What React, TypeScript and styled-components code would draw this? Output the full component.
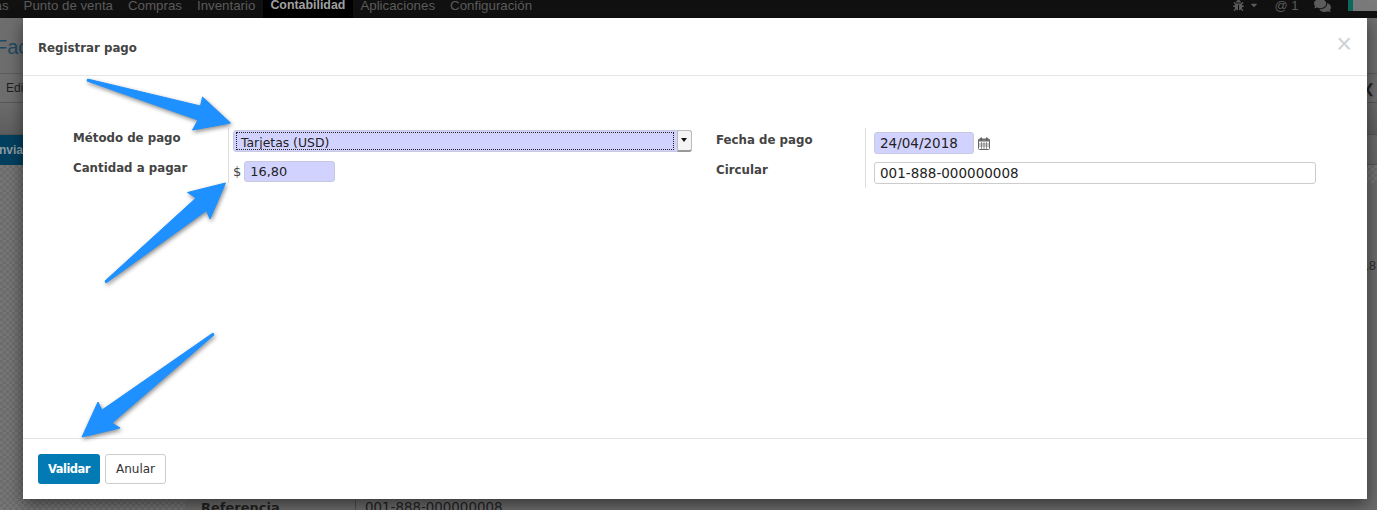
import React from 'react';
import styled, { createGlobalStyle } from 'styled-components';
import { FaBug, FaCaretDown, FaComments } from 'react-icons/fa';

const GlobalStyle = createGlobalStyle`
    html, body {
        margin: 0;
        padding: 0;
        background: #6f6f6f;
    }
`;

const navItems = ['as', 'Punto de venta', 'Compras', 'Inventario', 'Contabilidad', 'Aplicaciones', 'Configuración'];

const Arrow = ({ points }: { points: string }) => (
    <polygon points={points} fill="#1e90ff" stroke="#1e90ff" strokeWidth="1" strokeLinejoin="round" />
);

const CalendarIcon = () => (
    <svg width="12" height="13" viewBox="0 0 12 13">
        <rect x="0.5" y="2" width="11" height="10.5" rx="1" fill="#fff" stroke="#666" />
        <rect x="0.5" y="2" width="11" height="2.5" fill="#777" />
        <rect x="2.5" y="0.5" width="1.5" height="3" fill="#555" />
        <rect x="8" y="0.5" width="1.5" height="3" fill="#555" />
        <path d="M3.5 5V12M6 5V12M8.5 5V12M1 7H11M1 9H11" stroke="#777" strokeWidth="0.8" />
    </svg>
);

const App = () => {
    return (
        <Page>
            <GlobalStyle />
            <Backdrop>
                <NavBar>
                    <NavList>
                        {navItems.map(item => (
                            <NavItem key={item} active={item === 'Contabilidad'}>{item}</NavItem>
                        ))}
                    </NavList>
                    <NavTools>
                        <FaBug size={11} />
                        <FaCaretDown size={10} />
                        <NavMention>@ 1</NavMention>
                        <FaComments size={17} />
                        <Avatar />
                    </NavTools>
                </NavBar>
                <TitleBar>Fac</TitleBar>
                <ToolBar>
                    <span>Edi</span>
                    <Chevron>❮</Chevron>
                </ToolBar>
                <EmptyBar />
                <StatusBar>
                    <StatusButton>Envia</StatusButton>
                </StatusBar>
                <Workspace>
                    <Sheet>
                        <SheetAmount>18</SheetAmount>
                        <SheetRow>
                            <SheetLabel>Referencia</SheetLabel>
                            <SheetValue>001-888-000000008</SheetValue>
                        </SheetRow>
                    </Sheet>
                </Workspace>
            </Backdrop>

            <Modal>
                <ModalHeader>
                    <ModalTitle>Registrar pago</ModalTitle>
                    <CloseButton>×</CloseButton>
                </ModalHeader>
                <ModalBody>
                    <FormGroup>
                        <FieldLabels>
                            <FieldLabel>Método de pago</FieldLabel>
                            <FieldLabel>Cantidad a pagar</FieldLabel>
                        </FieldLabels>
                        <FieldValues>
                            <SelectBox>
                                <SelectText>Tarjetas (USD)</SelectText>
                                <SelectButton />
                            </SelectBox>
                            <AmountRow>
                                <Currency>$</Currency>
                                <AmountInput>16,80</AmountInput>
                            </AmountRow>
                        </FieldValues>
                    </FormGroup>
                    <RightGroup>
                        <RightLabels>
                            <FieldLabel>Fecha de pago</FieldLabel>
                            <FieldLabel>Circular</FieldLabel>
                        </RightLabels>
                        <RightValues>
                            <DateRow>
                                <DateInput>24/04/2018</DateInput>
                                <CalendarIcon />
                            </DateRow>
                            <TextInput>001-888-000000008</TextInput>
                        </RightValues>
                    </RightGroup>
                </ModalBody>
                <ModalFooter>
                    <PrimaryButton>Validar</PrimaryButton>
                    <SecondaryButton>Anular</SecondaryButton>
                </ModalFooter>
            </Modal>

            <ArrowLayer width="1377" height="510" viewBox="0 0 1377 510">
                <Arrow points="87.5,79 200.5,106 202.5,97 230.5,123 192.5,130 198,120 87,81" />
                <Arrow points="106,283 206.5,210.5 210,219 225.5,183 187.5,192.5 196,198 105,281" />
                <Arrow points="213,333 102,410 98,402 82,437 120,428 112,423 214,335" />
            </ArrowLayer>
        </Page>
    );
};

const Page = styled.div`
    position: relative;
    width: 1377px;
    height: 510px;
    overflow: hidden;
`;

const Backdrop = styled.div`
    width: 100%;
    height: 100%;
    display: flex;
    flex-direction: column;
    background: #6e6e6e;
    font-family: "Liberation Sans", Arial, sans-serif;
`;

const NavBar = styled.div`
    height: 18px;
    flex: none;
    background: #111;
    display: flex;
    justify-content: space-between;
    color: #5c5c5c;
`;

const NavList = styled.div`
    display: flex;
    margin-left: -13px;
`;

const NavItem = styled.div<{ active?: boolean }>`
    height: 18px;
    padding: 0 7.5px;
    background: ${props => props.active ? '#000' : 'transparent'};
    color: ${props => props.active ? '#a2a2a2' : '#5c5c5c'};
    font-size: ${props => props.active ? '12.4px' : '13.3px'};
    font-weight: ${props => props.active ? 700 : 400};
    line-height: 11px;
    white-space: nowrap;
`;

const NavTools = styled.div`
    display: flex;
    align-items: flex-start;
    gap: 7px;
    svg:first-child {
        margin-right: -2px;
    }
    svg:nth-last-child(2) {
        margin-top: -3px;
    }
`;

const NavMention = styled.span`
    font-size: 13px;
    line-height: 11px;
    margin: 0 8px 0 8px;
`;

const Avatar = styled.div`
    width: 29px;
    height: 11px;
    margin-left: 10.5px;
    background: #7a7a7a;
    border-left: 5px solid #0c6b5e;
    box-sizing: border-box;
`;

const TitleBar = styled.div`
    height: 56px;
    flex: none;
    box-sizing: border-box;
    padding-top: 17px;
    margin-left: -5px;
    border-bottom: 1px solid #5c5c5c;
    color: #1f4a63;
    font-size: 20px;
    line-height: 24px;
`;

const ToolBar = styled.div`
    height: 29px;
    flex: none;
    box-sizing: border-box;
    padding: 0 0 0 6px;
    display: flex;
    justify-content: space-between;
    align-items: center;
    border-bottom: 1px solid #565656;
    color: #1f1f1f;
    font-size: 12px;
`;

const Chevron = styled.span`
    font-size: 13px;
    margin-right: 2px;
    color: #222;
`;

const EmptyBar = styled.div`
    height: 32px;
    flex: none;
    box-sizing: border-box;
    border-bottom: 1px solid #545454;
    background: linear-gradient(#6c6c6c, #5e5e5e);
`;

const StatusBar = styled.div`
    height: 30px;
    flex: none;
    box-sizing: border-box;
    border-bottom: 1px solid #555;
    background: linear-gradient(#6a6a6a, #666);
`;

const StatusButton = styled.div`
    width: 23px;
    height: 30px;
    overflow: hidden;
    direction: rtl;
    background: #03405f;
    color: #8e9ba3;
    font-size: 12px;
    font-weight: 700;
    line-height: 30px;
    white-space: nowrap;
`;

const Workspace = styled.div`
    flex: 1;
    min-height: 0;
    padding: 18px 0 0 185px;
    background: repeating-conic-gradient(#6c6c6c 0 25%, #767676 0 50%) 0 0 / 6px 6px;
`;

const Sheet = styled.div`
    height: 100%;
    background: #6b6b6b;
    display: flex;
    flex-direction: column;
`;

const SheetAmount = styled.div`
    align-self: flex-end;
    margin-top: 75px;
    margin-right: 1px;
    color: #2d2d2d;
    font-size: 13px;
    line-height: 15px;
`;

const SheetRow = styled.div`
    margin-top: auto;
    height: 30px;
    flex: none;
    display: flex;
    transform: translateY(20px);
    font-family: "DejaVu Sans", sans-serif;
    font-size: 13.4px;
    color: #222;
`;

const SheetLabel = styled.div`
    width: 171px;
    box-sizing: border-box;
    padding-left: 16px;
    border-right: 1px solid #4e4e4e;
    font-size: 13px;
    font-weight: 700;
`;

const SheetValue = styled.div`
    padding-left: 9px;
`;

const Modal = styled.div`
    position: absolute;
    left: 23px;
    top: 18px;
    width: 1344px;
    height: 481px;
    display: flex;
    flex-direction: column;
    background: #fff;
    box-shadow: 0 5px 15px rgba(0, 0, 0, 0.5);
    font-family: "DejaVu Sans", Verdana, sans-serif;
    color: #333;
`;

const ModalHeader = styled.div`
    height: 58px;
    flex: none;
    box-sizing: border-box;
    padding: 0 15px;
    display: flex;
    justify-content: space-between;
    align-items: center;
    border-bottom: 1px solid #e5e5e5;
`;

const ModalTitle = styled.div`
    font-size: 11.8px;
    font-weight: 700;
    color: #444;
    margin-top: 2px;
`;

const CloseButton = styled.div`
    font-family: "Liberation Sans", sans-serif;
    font-size: 27px;
    line-height: 27px;
    color: #cfd3d6;
    margin-top: -4px;
`;

const ModalBody = styled.div`
    flex: 1;
    min-height: 0;
    box-sizing: border-box;
    padding: 52px 0 0 50px;
    display: flex;
    align-items: flex-start;
`;

const FormGroup = styled.div`
    display: flex;
    height: 55px;
`;

const FieldLabels = styled.div`
    width: 155px;
    display: flex;
    flex-direction: column;
    gap: 12px;
    padding-top: 1px;
`;

const FieldLabel = styled.div`
    font-size: 11.8px;
    font-weight: 700;
    line-height: 18px;
    color: #444;
`;

const FieldValues = styled.div`
    width: 459px;
    padding-left: 4px;
    padding-top: 2px;
    border-left: 1px solid #ddd;
`;

const SelectBox = styled.div`
    height: 22px;
    box-sizing: border-box;
    display: flex;
    padding: 1px 0 1px 2px;
    background: #d2d2ff;
    border: 1px solid #c8c8e0;
    border-radius: 3px;
`;

const SelectText = styled.div`
    flex: 1;
    box-sizing: border-box;
    padding-left: 4px;
    border: 1px dotted #222;
    font-size: 12.4px;
    line-height: 19px;
    color: #222;
    overflow: hidden;
`;

const SelectButton = styled.div`
    width: 15px;
    margin: -2px -1px -2px 3px;
    position: relative;
    background: #f4f4f4;
    border: 1px solid #bbb;
    border-bottom: 2px solid #999;
    border-radius: 0 3px 3px 0;
    box-sizing: border-box;
    &::after {
        content: '';
        position: absolute;
        left: 3px;
        top: 7px;
        border: 3.5px solid transparent;
        border-top: 4px solid #111;
        border-bottom: 0;
    }
`;

const AmountRow = styled.div`
    display: flex;
    align-items: center;
    gap: 3px;
    margin-top: 9px;
`;

const Currency = styled.span`
    font-size: 13px;
    color: #444;
`;

const InputBase = styled.div`
    height: 22px;
    box-sizing: border-box;
    padding: 0 5px;
    border: 1px solid #ccc;
    border-radius: 3px;
    font-size: 13.5px;
    line-height: 20px;
    color: #222;
`;

const AmountInput = styled(InputBase)`
    width: 91px;
    height: 21px;
    background: #d2d2ff;
    border-color: #c8c8e0;
    font-size: 12.9px;
`;

const RightGroup = styled.div`
    display: flex;
    height: 60px;
    margin-left: 24px;
`;

const RightLabels = styled(FieldLabels)`
    width: 149px;
    padding-top: 3px;
`;

const RightValues = styled.div`
    width: 442px;
    padding: 4px 0 0 8px;
    border-left: 1px solid #ddd;
`;

const DateRow = styled.div`
    display: flex;
    align-items: center;
    gap: 4px;
`;

const DateInput = styled(InputBase)`
    width: 100px;
    background: #d2d2ff;
    border-color: #c8c8e0;
`;

const TextInput = styled(InputBase)`
    margin-top: 8px;
`;

const ModalFooter = styled.div`
    height: 61px;
    flex: none;
    box-sizing: border-box;
    padding: 0 15px;
    display: flex;
    align-items: center;
    gap: 5px;
    border-top: 1px solid #e5e5e5;
`;

const PrimaryButton = styled.div`
    width: 62px;
    height: 30px;
    box-sizing: border-box;
    text-align: center;
    background: #027bb5;
    border-radius: 3px;
    color: #fff;
    font-size: 11.5px;
    letter-spacing: -0.5px;
    font-weight: 700;
    line-height: 30px;
`;

const SecondaryButton = styled.div`
    width: 61px;
    height: 30px;
    box-sizing: border-box;
    text-align: center;
    background: #fff;
    border: 1px solid #ccc;
    border-radius: 3px;
    color: #333;
    font-size: 12px;
    line-height: 28px;
`;

const ArrowLayer = styled.svg`
    position: absolute;
    left: 0;
    top: 0;
    filter: drop-shadow(1px 2px 2px rgba(0, 0, 0, 0.45));
`;

export default App;
